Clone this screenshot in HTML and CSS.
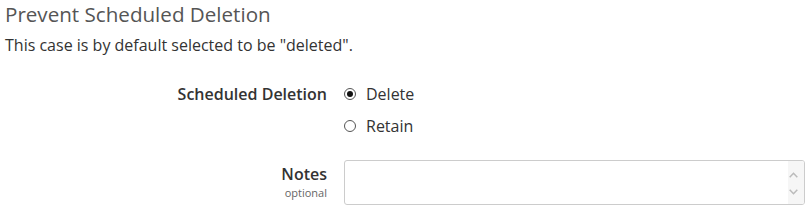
FILE: index.html
```html
<!doctype html>
<html lang="en">

<head>
    <meta charset="utf-8" />
    <link rel="icon" href="data:,">
    <meta name="viewport" content="width=device-width, initial-scale=1">
    <link rel="stylesheet" href="styles.css">
</head>

<body>
    <div class="panel">
        <h3 class="title">Prevent Scheduled Deletion</h3>
        <p class="intro">This case is by default selected to be "deleted".</p>
        <form class="form">
            <div class="row">
                <div class="label">Scheduled Deletion</div>
                <div class="control">
                    <label class="radio">
                        <input type="radio" name="deletion" value="delete" checked />
                        Delete
                    </label>
                    <label class="radio">
                        <input type="radio" name="deletion" value="retain" />
                        Retain
                    </label>
                </div>
            </div>
            <div class="row row-notes">
                <div class="label">
                    Notes
                    <small>optional</small>
                </div>
                <div class="control notes-wrap">
                    <textarea class="notes"></textarea>
                    <!-- fake scrollbar, the real one is not drawn headless -->
                    <span class="scrollbar" aria-hidden="true">
                        <svg width="9" height="6" viewBox="0 0 9 6">
                            <path d="M0.7 5.3L4.5 1.3L8.3 5.3" fill="none" stroke="#bbb" stroke-width="1.5" />
                        </svg>
                        <svg width="9" height="6" viewBox="0 0 9 6">
                            <path d="M0.7 0.7L4.5 4.7L8.3 0.7" fill="none" stroke="#bbb" stroke-width="1.5" />
                        </svg>
                    </span>
                </div>
            </div>
        </form>
    </div>
</body>

</html>
```

FILE: styles.css
```css
html {
    font-family: "Open Sans", "Noto Sans", sans-serif;
    font-size: 16px;
    line-height: 24px;
    color: #333;
}

body {
    margin: 0;
}

.panel {
    padding: 0 6px 0 5px;
}

.title {
    margin: 0;
    font-size: 20.6px;
    font-weight: normal;
    line-height: 28px;
    color: #555;
}

.intro {
    margin: 5px 0 0;
}

.form {
    margin-top: 21px;
}

.row {
    display: grid;
    grid-template-columns: 322px 1fr;
    column-gap: 17px;
}

.row-notes {
    margin-top: 18px;
}

.label {
    text-align: right;
    font-weight: 600;
    padding-top: 4px;
}

.row-notes .label {
    padding-top: 2px;
}

.label small {
    display: block;
    font-size: 11px;
    font-weight: normal;
    color: #666;
    line-height: 14px;
}

.radio {
    display: flex;
    align-items: center;
    height: 32px;
}

.radio input {
    appearance: none;
    box-sizing: border-box;
    display: grid;
    place-content: center;
    width: 12px;
    height: 12px;
    margin: 0 10px 0 0;
    border: 1px solid #555;
    border-radius: 50%;
    background: #fff;
}

.radio input:checked::before {
    content: "";
    width: 6px;
    height: 6px;
    border-radius: 50%;
    background: #111;
}

.notes-wrap {
    position: relative;
}

.notes {
    display: block;
    box-sizing: border-box;
    width: 100%;
    height: 45px;
    margin: 0;
    padding: 4px 20px 4px 8px;
    border: 1px solid #ccc;
    border-radius: 3px;
    resize: none;
    font: inherit;
}

.scrollbar {
    position: absolute;
    top: 1px;
    right: 1px;
    bottom: 1px;
    width: 16px;
    display: flex;
    flex-direction: column;
    justify-content: space-between;
    align-items: flex-start;
    padding: 11px 0 9px 1px;
    box-sizing: border-box;
    background: #f6f6f6;
    border-radius: 0 2px 2px 0;
}
```
